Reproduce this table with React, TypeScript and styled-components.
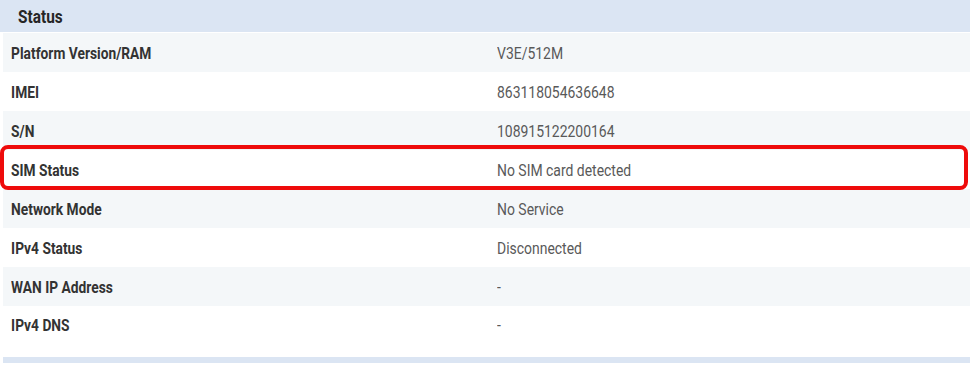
import styled, { createGlobalStyle } from 'styled-components';

const GlobalStyle = createGlobalStyle`
  html, body {
    margin: 0;
    padding: 0;
    background: #ffffff;
  }
  body {
    font-family: Roboto, "Liberation Sans", Arial, sans-serif;
  }
`;

interface IStatusRow {
  label: string;
  value: string;
  highlighted?: boolean;
}

const rows: IStatusRow[] = [
  { label: 'Platform Version/RAM', value: 'V3E/512M' },
  { label: 'IMEI', value: '863118054636648' },
  { label: 'S/N', value: '108915122200164' },
  { label: 'SIM Status', value: 'No SIM card detected', highlighted: true },
  { label: 'Network Mode', value: 'No Service' },
  { label: 'IPv4 Status', value: 'Disconnected' },
  { label: 'WAN IP Address', value: '-' },
  { label: 'IPv4 DNS', value: '-' },
];

const StyledPanel = styled.div`
  width: 970px;
  height: 370px;
  overflow: hidden;
  background: #ffffff;
`;

// the screenshot uses a condensed face, so regular Roboto gets squeezed horizontally
const Condensed = styled.span`
  display: inline-block;
  transform: scaleX(0.81);
  transform-origin: left center;
  white-space: nowrap;
`;

const StyledHeader = styled.div`
  height: 32px;
  display: flex;
  align-items: center;
  padding-left: 18px;
  background: #dbe5f3;
  color: #262626;
  font-size: 19px;
  font-weight: 700;
`;

const StyledTable = styled.div`
  display: flex;
  flex-direction: column;
  margin: 1px 0 0 3px;
`;

const StyledRow = styled.div<{ $striped: boolean }>`
  position: relative;
  height: 39px;
  display: grid;
  grid-template-columns: 494px 1fr;
  align-items: center;
  background: ${({ $striped }) => ($striped ? '#f4f7f9' : '#ffffff')};

  &:last-child {
    height: 51px;
    align-items: start;
    padding-top: 9px;
    box-sizing: border-box;
  }
`;

const StyledHighlight = styled.div`
  position: absolute;
  z-index: 2;
  left: -3px;
  right: 2px;
  top: -5px;
  bottom: -1px;
  border: 4px solid #ee0b0b;
  border-radius: 8px;
  pointer-events: none;
`;

const StyledLabel = styled(Condensed)`
  padding-left: 10px;
  color: #333333;
  font-size: 17px;
  font-weight: 700;
`;

const StyledValue = styled(Condensed)`
  color: #595959;
  font-size: 17px;
  transform: scaleX(0.82);
`;

const StyledFooter = styled.div`
  height: 6px;
  margin-left: 3px;
  background: #dbe5f3;
`;

export default function App() {
  return (
    <>
      <GlobalStyle />
      <StyledPanel>
        <StyledHeader>
          <Condensed>Status</Condensed>
        </StyledHeader>
        <StyledTable>
          {rows.map((row, i) => (
            <StyledRow key={row.label} $striped={i % 2 === 0}>
              <div>
                <StyledLabel>{row.label}</StyledLabel>
              </div>
              <div>
                <StyledValue>{row.value}</StyledValue>
              </div>
              {row.highlighted && <StyledHighlight />}
            </StyledRow>
          ))}
        </StyledTable>
        <StyledFooter />
      </StyledPanel>
    </>
  );
}
